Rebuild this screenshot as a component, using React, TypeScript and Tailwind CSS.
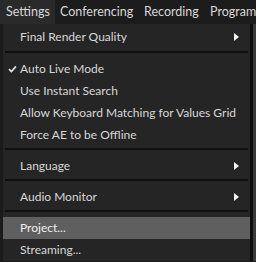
const FONT = { fontFamily: 'Lato, "Noto Sans", sans-serif' };

type Item =
  | { kind: 'item'; label: string; checked?: boolean; sub?: boolean; active?: boolean }
  | { kind: 'sep'; tall?: boolean };

const ITEMS: Item[] = [
  { kind: 'item', label: 'Final Render Quality', sub: true },
  { kind: 'sep', tall: true },
  { kind: 'item', label: 'Auto Live Mode', checked: true },
  { kind: 'item', label: 'Use Instant Search' },
  { kind: 'item', label: 'Allow Keyboard Matching for Values Grid' },
  { kind: 'item', label: 'Force AE to be Offline' },
  { kind: 'sep' },
  { kind: 'item', label: 'Language', sub: true },
  { kind: 'sep' },
  { kind: 'item', label: 'Audio Monitor', sub: true },
  { kind: 'sep' },
  { kind: 'item', label: 'Project...', active: true },
  { kind: 'item', label: 'Streaming...' },
];

function Arrow() {
  return (
    <svg width="5" height="8" viewBox="0 0 5 8" className="shrink-0">
      <path d="M0 0 L5 4 L0 8 Z" fill="#f2f2f2" />
    </svg>
  );
}

function Check() {
  return (
    <svg width="9" height="8" viewBox="0 0 9 8">
      <path d="M1 4.2 L3.4 6.6 L8 1.4" stroke="#e0e0e0" strokeWidth="1.7" fill="none" />
    </svg>
  );
}

export default function App() {
  return (
    <div className="h-[262px] w-[256px] overflow-hidden bg-[#1b1b1b] text-[12px] text-[#d8d8d8]" style={FONT}>
      <div className="flex h-[24px] items-center bg-[#1c1c1c] whitespace-nowrap text-[12.5px]">
        <div className="flex h-full w-[55px] shrink-0 items-center bg-[#2a2a2a] pl-[6px]">Settings</div>
        <div className="w-[89px] shrink-0 pl-[5px]">Conferencing</div>
        <div className="w-[66px] shrink-0">Recording</div>
        <div className="shrink-0">Program</div>
      </div>
      <div className="flex">
        <div className="w-[3px] shrink-0 bg-[#1b1b1b]" />
        <div className="w-[247px] shrink-0 bg-[#252525] pt-[2px]">
          {ITEMS.map((it, i) =>
            it.kind === 'sep' ? (
              <div key={i} className={`${it.tall ? 'h-[10px] pt-[3px]' : 'h-[9px] pt-[2px]'}`}>
                <div className="mx-[2px] h-[2px] bg-[#0f0f0f]" />
              </div>
            ) : (
              <div
                key={i}
                className={`flex h-[22px] items-center pr-[11px] ${it.active ? 'bg-[#5f5f5f] text-[#f0f0f0]' : ''}`}
              >
                <div className="flex w-[17px] shrink-0 justify-center pl-[1px]">{it.checked && <Check />}</div>
                <div className="min-w-0 flex-1 whitespace-nowrap">{it.label}</div>
                {it.sub && <Arrow />}
              </div>
            )
          )}
        </div>
        <div className="w-[3px] shrink-0 bg-[#0e0e0e]" />
        <div className="w-[3px] shrink-0 bg-[#3a3a3a]" />
      </div>
    </div>
  );
}
